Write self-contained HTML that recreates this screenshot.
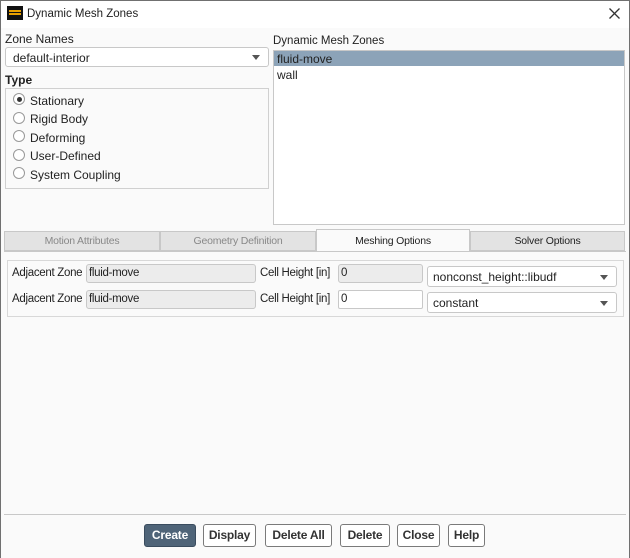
<!DOCTYPE html>
<html><head><style>
*{box-sizing:border-box;margin:0;padding:0}
body{width:630px;height:558px;background:#fafafa;font-family:"Liberation Sans","DejaVu Sans",sans-serif;font-size:12px;color:#222;position:relative;overflow:hidden}
.a{position:absolute}
.frame{left:0;top:0;width:630px;height:558px;border:1px solid #707070;border-bottom:none}
.title{left:1px;top:1px;width:628px;height:27px;background:#fff}
.inp{background:#fff;border:1px solid #c8c8c8;border-radius:3px}
.dis{background:#ececec;border:1px solid #c8c8c8;border-radius:3px}
.tri{width:0;height:0;border-left:4px solid transparent;border-right:4px solid transparent;border-top:5px solid #555}
.rad{width:12px;height:12px;border:1px solid #999;border-radius:50%;background:#fff}
.tab{top:231px;height:20px;background:#e3e3e3;border:1px solid #c8c8c8;text-align:center;line-height:18px;font-size:10.5px;color:#888;letter-spacing:-0.2px}
.btn{top:524px;height:23px;border:1px solid #7a7a7a;border-radius:3px;background:#fff;font-weight:bold;font-size:12px;color:#333;text-align:center;line-height:21px;letter-spacing:-0.2px}
.row{font-size:11.5px;letter-spacing:-0.3px}
</style></head><body>
<div class="a frame"></div>
<div class="a title"></div>
<div class="a" style="left:7px;top:6px;width:16px;height:14px;background:#111"><div style="margin:4px 2px;height:5px;border-top:2px solid #e8a000;border-bottom:2px solid #e8a000"></div></div>
<div class="a" style="left:27px;top:8px;font-size:11.5px">Dynamic Mesh Zones</div>
<svg class="a" style="left:609px;top:8px" width="11" height="11"><path d="M0.5 0.5L10.5 10.5M10.5 0.5L0.5 10.5" stroke="#333" stroke-width="1.3"/></svg>

<div class="a" style="left:5px;top:32px">Zone Names</div>
<div class="a inp" style="left:5px;top:47px;width:264px;height:20px"><span style="position:absolute;left:7px;top:3px">default-interior</span><div class="tri" style="position:absolute;right:8px;top:7px"></div></div>
<div class="a" style="left:5px;top:73px;font-weight:bold">Type</div>
<div class="a" style="left:5px;top:88px;width:264px;height:101px;border:1px solid #d0d0d0;background:#fafafa"></div>
<div class="a rad" style="left:13px;top:93px"><div style="width:5px;height:5px;background:#333;border-radius:50%;margin:2.5px"></div></div><div class="a" style="left:30px;top:94px">Stationary</div>
<div class="a rad" style="left:13px;top:112px"></div><div class="a" style="left:30px;top:112px">Rigid Body</div>
<div class="a rad" style="left:13px;top:130px"></div><div class="a" style="left:30px;top:131px">Deforming</div>
<div class="a rad" style="left:13px;top:149px"></div><div class="a" style="left:30px;top:149px">User-Defined</div>
<div class="a rad" style="left:13px;top:167px"></div><div class="a" style="left:30px;top:168px">System Coupling</div>

<div class="a" style="left:273px;top:35px;font-size:11.5px">Dynamic Mesh Zones</div>
<div class="a" style="left:273px;top:50px;width:352px;height:175px;background:#fff;border:1px solid #c8c8c8"></div>
<div class="a" style="left:274px;top:51px;width:350px;height:15px;background:#8ca3b8"></div>
<div class="a" style="left:277px;top:52px">fluid-move</div>
<div class="a" style="left:277px;top:68px">wall</div>

<div class="a tab" style="left:4px;width:156px">Motion Attributes</div>
<div class="a tab" style="left:160px;width:156px">Geometry Definition</div>
<div class="a tab" style="left:316px;top:229px;height:23px;width:154px;background:#fafafa;color:#222;line-height:22px;border-bottom:none">Meshing Options</div>
<div class="a tab" style="left:470px;width:155px;color:#222">Solver Options</div>
<div class="a" style="left:4px;top:251px;width:622px;height:1px;background:#c8c8c8"></div>

<div class="a" style="left:7px;top:260px;width:617px;height:57px;border:1px solid #d8d8d8"></div>
<div class="a row" style="left:12px;top:267px">Adjacent Zone</div>
<div class="a dis row" style="left:86px;top:264px;width:170px;height:19px;padding:2px 2px">fluid-move</div>
<div class="a row" style="left:260px;top:267px">Cell Height [in]</div>
<div class="a dis row" style="left:338px;top:264px;width:85px;height:19px;padding:2px 2px">0</div>
<div class="a inp" style="left:427px;top:266px;width:190px;height:21px;padding:3px 5px">nonconst_height::libudf<div class="tri" style="position:absolute;right:8px;top:8px"></div></div>
<div class="a row" style="left:12px;top:293px">Adjacent Zone</div>
<div class="a dis row" style="left:86px;top:290px;width:170px;height:19px;padding:2px 2px">fluid-move</div>
<div class="a row" style="left:260px;top:293px">Cell Height [in]</div>
<div class="a inp row" style="left:338px;top:290px;width:85px;height:19px;padding:2px 2px;border-radius:2px">0</div>
<div class="a inp" style="left:427px;top:292px;width:190px;height:21px;padding:3px 5px">constant<div class="tri" style="position:absolute;right:8px;top:8px"></div></div>

<div class="a" style="left:4px;top:514px;width:622px;height:1px;background:#c8c8c8"></div>
<div class="a btn" style="left:144px;width:52px;background:#4f6478;color:#fff;border-color:#3a4c5e">Create</div>
<div class="a btn" style="left:203px;width:53px">Display</div>
<div class="a btn" style="left:265px;width:67px">Delete All</div>
<div class="a btn" style="left:340px;width:50px">Delete</div>
<div class="a btn" style="left:397px;width:43px">Close</div>
<div class="a btn" style="left:448px;width:37px">Help</div>
</body></html>
